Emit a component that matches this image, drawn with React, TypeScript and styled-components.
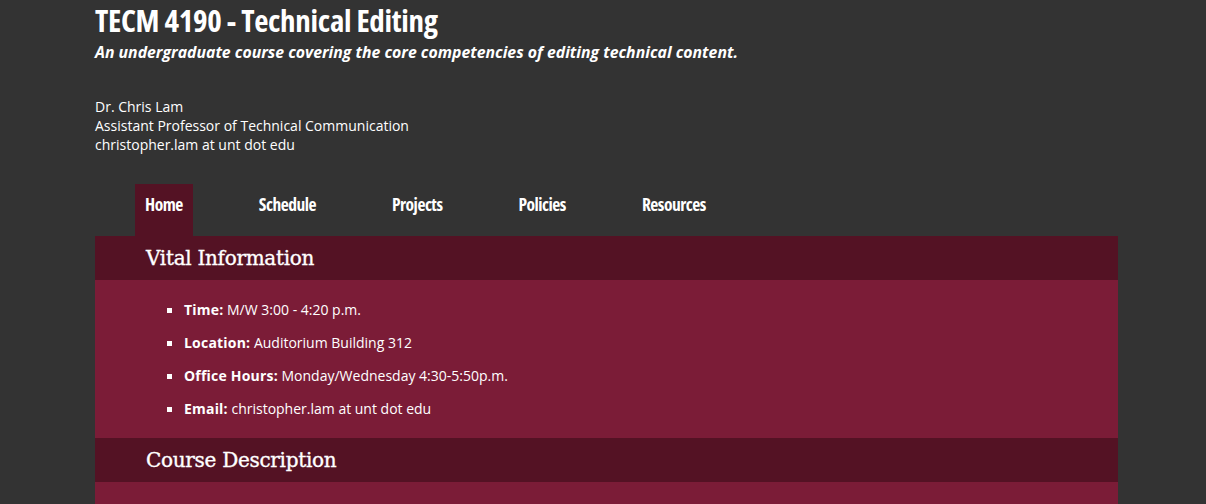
import React from "react";
import styled, { createGlobalStyle } from "styled-components";

const Global = createGlobalStyle`
  html, body { margin: 0; padding: 0; background: #333333; }
  body { font-family: "Open Sans", "Liberation Sans", sans-serif; color: #ffffff; }
`;

const Page = styled.div`
  width: 1023px;
  margin-left: 95px;
  padding-top: 1px;
`;

const Title = styled.h1`
  margin: 0;
  font-family: "Open Sans", sans-serif;
  font-stretch: 75%;
  font-weight: 700;
  font-size: 31px;
  line-height: 38px;
  letter-spacing: -0.3px;
  color: #ffffff;
`;

const Subtitle = styled.p`
  margin: 3px 0 0;
  font-family: "Open Sans", sans-serif;
  font-style: italic;
  font-weight: 700;
  font-size: 15.8px;
  line-height: 20px;
`;

const Contact = styled.div`
  margin-top: 35px;
  font-size: 14px;
  line-height: 19px;
`;

const Nav = styled.ul`
  list-style: none;
  margin: 30px 0 0;
  padding: 0 0 0 40px;
  display: flex;
  gap: 56px;
`;

const NavItem = styled.li<{ $active?: boolean }>`
  box-sizing: border-box;
  height: 52px;
  padding: 9px 10px 0;
  font-family: "Open Sans", sans-serif;
  font-stretch: 75%;
  font-weight: 700;
  font-size: 17.5px;
  line-height: 22px;
  letter-spacing: -0.5px;
  background: ${(p) => (p.$active ? "#541224" : "transparent")};
`;

const Section = styled.section`
  background: #7b1c37;
`;

const SectionHeader = styled.h2`
  margin: 0;
  height: 44px;
  display: flex;
  align-items: center;
  padding-left: 51px;
  background: #541224;
  font-family: "DejaVu Serif", "Liberation Serif", serif;
  font-weight: 400;
  font-size: 20px;
  letter-spacing: -0.3px;
  -webkit-text-stroke: 0.35px #ffffff;
`;

const List = styled.ul`
  margin: 0;
  padding: 20px 0 20px 89px;
  list-style: square;
`;

const Item = styled.li`
  font-size: 14px;
  line-height: 19px;
  & + & { margin-top: 14px; }
  &::marker { font-size: 15px; }
`;

const Label = styled.strong`
  font-weight: 700;
  letter-spacing: 0.2px;
`;

const Empty = styled.div`
  height: 40px;
`;

const info = [
  ["Time:", "M/W 3:00 - 4:20 p.m."],
  ["Location:", "Auditorium Building 312"],
  ["Office Hours:", "Monday/Wednesday 4:30-5:50p.m."],
  ["Email:", "christopher.lam at unt dot edu"],
];

export default function App() {
  return (
    <>
      <Global />
      <Page>
        <Title>TECM 4190 - Technical Editing</Title>
        <Subtitle>An undergraduate course covering the core competencies of editing technical content.</Subtitle>
        <Contact>
          Dr. Chris Lam<br />
          Assistant Professor of Technical Communication<br />
          christopher.lam at unt dot edu
        </Contact>
        <Nav>
          <NavItem $active>Home</NavItem>
          <NavItem>Schedule</NavItem>
          <NavItem>Projects</NavItem>
          <NavItem>Policies</NavItem>
          <NavItem>Resources</NavItem>
        </Nav>
        <Section>
          <SectionHeader>Vital Information</SectionHeader>
          <List>
            {info.map(([k, v]) => (
              <Item key={k}>
                <Label>{k}</Label> {v}
              </Item>
            ))}
          </List>
          <SectionHeader>Course Description</SectionHeader>
          <Empty />
        </Section>
      </Page>
    </>
  );
}
